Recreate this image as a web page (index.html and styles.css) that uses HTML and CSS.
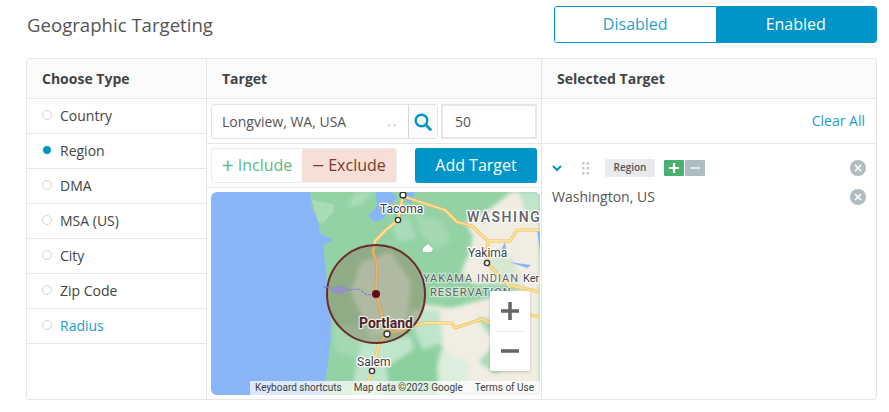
FILE: index.html
```html
<!DOCTYPE html>
<html>

<head>
	<meta charset="UTF-8">
	<title>Geographic Targeting</title>
	<link rel="stylesheet" href="styles.css">
</head>

<body>

	<div class="page">

		<div class="top">
			<h1 class="title">Geographic Targeting</h1>
			<div class="toggle">
				<button type="button" class="toggle-btn">Disabled</button>
				<button type="button" class="toggle-btn on">Enabled</button>
			</div>
		</div>

		<div class="panel">

			<div class="col col-type">
				<div class="col-head">Choose Type</div>
				<ul class="types">
					<li><span class="radio"></span>Country</li>
					<li><span class="radio checked"></span>Region</li>
					<li><span class="radio"></span>DMA</li>
					<li><span class="radio"></span>MSA (US)</li>
					<li><span class="radio"></span>City</li>
					<li><span class="radio"></span>Zip Code</li>
					<li class="active"><span class="radio"></span>Radius</li>
				</ul>
			</div>

			<div class="col col-target">
				<div class="col-head">Target</div>

				<div class="search-row">
					<div class="search">
						<span class="search-text">Longview, WA, USA</span>
						<span class="search-more">. .</span>
						<span class="search-btn">
							<svg width="18" height="18" viewBox="0 0 18 18">
								<circle cx="7.5" cy="7.5" r="5.8" fill="none" stroke="#0095c8" stroke-width="2.4"/>
								<path d="M11.8 11.8 L16.4 16.4" stroke="#0095c8" stroke-width="2.8" stroke-linecap="round"/>
							</svg>
						</span>
					</div>
					<div class="radius-box">50</div>
				</div>

				<div class="action-row">
					<div class="mode">
						<span class="mode-btn include"><b class="sign">+</b> Include</span>
						<span class="mode-btn exclude"><b class="sign">&minus;</b> Exclude</span>
					</div>
					<button type="button" class="add-btn">Add Target</button>
				</div>

				<div class="map">
					<svg class="map-art" width="329" height="203" viewBox="0 0 329 203">
						<rect width="329" height="203" fill="#8ab4f8"/>
						<!-- land -->
						<path d="M99 0 L101 16 L107 29 L109 41 L122 48 L112 53 L114 71 L116 93 L116 103 L119 123 L121 136 L117 170 L114 190 L114 203 L329 203 L329 0 Z" fill="#94d2a5"/>
						<path d="M101 8 L122 12 L123 19 L111 32 L107 29 Z" fill="#a8dcb9"/>
						<!-- terrain, soft edges -->
						<g class="terrain">
							<path d="M145 0 L163 0 L150 12 L135 16 Z" fill="#a8dcb9"/>
							<path d="M205 22 L232 30 L240 48 L225 58 L210 42 Z" fill="#a3d8b3"/>
							<path d="M180 30 L198 25 L205 46 L186 50 Z" fill="#a8dcb9"/>
							<path d="M120 135 L160 130 L172 150 L150 168 L125 160 Z" fill="#a3d8b3"/>
							<path d="M150 150 L200 145 L205 175 L170 203 L140 203 Z" fill="#bfe5cb"/>
							<path d="M175 175 L215 150 L235 185 L215 203 L180 203 Z" fill="#8ccf9f"/>
							<path d="M150 70 L180 60 L200 90 L195 140 L160 145 L140 100 Z" fill="#bfe5cb"/>
							<!-- dry east side -->
							<path d="M329 0 L300 0 L288 10 L268 24 L254 30 L262 44 L258 62 L250 80 L262 92 L300 92 L329 100 Z" fill="#f1ede3"/>
							<path d="M210 112 L240 116 L329 92 L329 203 L228 203 L236 170 L226 140 Z" fill="#f1ede3"/>
							<path d="M200 118 L228 118 L232 150 L212 158 L204 140 Z" fill="#bfe5cb"/>
							<path d="M265 125 L295 130 L305 165 L285 182 L268 170 L285 150 Z" fill="#a8dcb9"/>
							<path d="M230 158 L258 172 L254 200 L228 203 L226 175 Z" fill="#dceedd"/>
							<path d="M308 0 L329 0 L329 30 L316 26 Z" fill="#bfe5cb"/>
							<path d="M270 60 L300 64 L312 88 L285 90 Z" fill="#d7e8d2"/>
						</g>
						<!-- sound, lakes, river -->
						<path d="M165 0 L180 0 L186 5 L178 15 L172 27 L164 30 L157 24 L166 14 Z" fill="#8ab4f8"/>
						<path d="M196 0 L204 0 L200 12 L194 8 Z" fill="#8ab4f8"/>
						<path d="M326 38 L329 36 L329 60 Z M290 58 L294 50 L296 64 Z M298 70 L320 73 L316 76 Z" fill="#8ab4f8"/>
						<path d="M217 52 L222 57 L220 60 L212 60 L212 56 Z" fill="#f8f9fa"/>
						<!-- roads -->
						<g fill="none" stroke-linejoin="round" stroke-linecap="round">
							<path d="M192 3 L197 6 L234 18 L246 30 L261 34 L277 49 L299 49 L306 38 L329 38 M277 49 L276 71 L297 93 L329 100 M192 3 L187 28 L175 38 L164 49 L162 60 L166 72 L165 102 L170 120 L176 142 L168 152 L161 179 L152 203 M176 142 L214 131 L241 131 L244 136 L271 127 L279 131 L319 123 L329 125" stroke="#f2bb68" stroke-width="3.2"/>
							<path d="M192 3 L197 6 L234 18 L246 30 L261 34 L277 49 L299 49 L306 38 L329 38 M277 49 L276 71 L297 93 L329 100 M192 3 L187 28 L175 38 L164 49 L162 60 L166 72 L165 102 L170 120 L176 142 L168 152 L161 179 L152 203 M176 142 L214 131 L241 131 L244 136 L271 127 L279 131 L319 123 L329 125" stroke="#fde293" stroke-width="1.8"/>
						</g>
						<!-- radius -->
						<circle cx="165" cy="102" r="49" fill="#8a4a3a" fill-opacity="0.28" stroke="#6b2a2c" stroke-width="2"/>
						<path d="M112 95 L122 96 L130 94 L138 98 L148 97 L156 103 L165 102" fill="none" stroke="#8a7fd0" stroke-width="1.200" stroke-dasharray="3 1"/>
						<path d="M119 97 L130 95 L137 99 L130 102 L120 100 Z" fill="#9a8ad8" fill-opacity="0.8"/>
						<circle cx="165" cy="102" r="4" fill="#5e0f14"/>
						<!-- places -->
						<g fill="#fff" stroke="#333" stroke-width="1.4">
							<circle cx="192" cy="3" r="3"/>
							<circle cx="187" cy="28" r="2.6"/>
							<circle cx="276" cy="71" r="2.6"/>
							<circle cx="176" cy="142" r="3"/>
							<circle cx="161" cy="179" r="2.6"/>
						</g>
						<g class="labels">
							<text x="169" y="21" class="place">Tacoma</text>
							<text x="256" y="30" class="region">WASHING</text>
							<text x="257" y="65" class="place">Yakima</text>
							<text x="212" y="90" class="area">YAKAMA INDIAN</text>
							<text x="312" y="90" class="place small">Ker</text>
							<text x="219" y="104" class="area">RESERVATION</text>
							<text x="148" y="136" class="city">Portland</text>
							<text x="146" y="174" class="place">Salem</text>
						</g>
					</svg>

					<div class="zoom-box">
						<span class="zoom-btn">
							<svg width="18" height="18" viewBox="0 0 18 18"><path d="M0 9 H18 M9 0 V18" stroke="#666" stroke-width="3.6"/></svg>
						</span>
						<span class="zoom-line"></span>
						<span class="zoom-btn">
							<svg width="18" height="18" viewBox="0 0 18 18"><path d="M0 9 H18" stroke="#666" stroke-width="3.6"/></svg>
						</span>
					</div>

					<div class="credits">
						<span>Keyboard shortcuts</span>
						<span>Map data &copy;2023 Google</span>
						<span>Terms of Use</span>
					</div>
				</div>
			</div>

			<div class="col col-selected">
				<div class="col-head">Selected Target</div>
				<div class="clear-row"><a class="clear-all">Clear All</a></div>
				<div class="sel-head">
					<svg class="chevron" width="10" height="7" viewBox="0 0 10 7"><path d="M1 1 L5 5 L9 1" fill="none" stroke="#0095c8" stroke-width="2"/></svg>
					<svg class="grip" width="7" height="13" viewBox="0 0 7 13" fill="#c5cacd">
						<rect x="0" y="0" width="2.500" height="2.500"/><rect x="4.500" y="0" width="2.500" height="2.500"/>
						<rect x="0" y="5" width="2.500" height="2.500"/><rect x="4.500" y="5" width="2.500" height="2.500"/>
						<rect x="0" y="10" width="2.500" height="2.500"/><rect x="4.500" y="10" width="2.500" height="2.500"/>
					</svg>
					<span class="chip">Region</span>
					<span class="pm">
						<span class="pm-btn plus"><svg width="12" height="12" viewBox="0 0 12 12"><path d="M1 6 H11 M6 1 V11" stroke="#fff" stroke-width="2.200"/></svg></span>
						<span class="pm-btn minus"><svg width="12" height="12" viewBox="0 0 12 12"><path d="M1 6 H11" stroke="#e4e8ea" stroke-width="2.200"/></svg></span>
					</span>
					<span class="remove"><svg width="8" height="8" viewBox="0 0 8 8"><path d="M1 1 L7 7 M7 1 L1 7" stroke="#fff" stroke-width="1.600"/></svg></span>
				</div>
				<div class="sel-item">
					<span class="sel-name">Washington, US</span>
					<span class="remove"><svg width="8" height="8" viewBox="0 0 8 8"><path d="M1 1 L7 7 M7 1 L1 7" stroke="#fff" stroke-width="1.600"/></svg></span>
				</div>
			</div>

		</div>
	</div>

</body>

</html>
```

FILE: styles.css
```css
* { box-sizing: border-box; }

body {
	margin: 0;
	background-color: #fff;
	font-family: "Open Sans", sans-serif;
	font-size: 14px;
	color: #444;
}

.page { padding: 6px 12px 0 26px; }

.top {
	display: flex;
	justify-content: space-between;
	align-items: center;
	height: 37px;
	margin-bottom: 15px;
}

.title {
	margin: 0 0 1px 1px;
	font-size: 18.6px;
	font-weight: 400;
	color: #555;
}

.toggle {
	display: flex;
	width: 323px;
	height: 37px;
	border: 1px solid #0095c8;
	border-radius: 3px;
	overflow: hidden;
}

.toggle-btn {
	flex: 1;
	border: 0;
	padding: 0 0 2px;
	background-color: #fff;
	color: #2a9fcc;
	font-family: "Open Sans", sans-serif;
	font-size: 16px;
}

.toggle-btn.on {
	background-color: #0095c8;
	color: #fff;
}

.panel {
	display: grid;
	grid-template-columns: 180px 335px 1fr;
	height: 342px;
	border: 1px solid #e6e6e6;
	border-radius: 3px;
}

.col { border-right: 1px solid #e6e6e6; }
.col-selected { border-right: 0; }

.col-head {
	height: 40px;
	padding: 0 15px;
	line-height: 39px;
	background-color: #fbfbfb;
	border-bottom: 1px solid #e6e6e6;
	font-weight: 700;
	color: #444;
}

.types {
	margin: 0;
	padding: 0;
	list-style: none;
}

.types li {
	display: flex;
	align-items: center;
	height: 35px;
	padding: 0 0 2px 15px;
	border-bottom: 1px solid #e6e6e6;
	color: #444;
}

.types li.active { color: #1d9cc9; }

.radio {
	width: 10px;
	height: 10px;
	margin-right: 8px;
	border: 1px solid #d4d4d4;
	border-radius: 50%;
	background-color: #fff;
}

.radio.checked {
	border: 1px solid #fff;
	background-color: #0095c8;
}

.search-row {
	display: flex;
	height: 45px;
	padding: 5px 4px 0;
	border-bottom: 1px solid #e6e6e6;
	gap: 3px;
}

.search {
	display: flex;
	align-items: center;
	width: 227px;
	height: 35px;
	padding-left: 10px;
	border: 1px solid #e4e4e4;
	border-radius: 3px;
	color: #555;
}

.search-text { flex: 1; }

.search-more {
	margin-right: 12px;
	font-size: 11px;
	color: #888;
}

.search-btn {
	display: flex;
	align-items: center;
	justify-content: center;
	width: 29px;
	height: 33px;
	border-left: 1px solid #d6d6d6;
	background-color: #fbfbfb;
}

.radius-box {
	width: 96px;
	height: 35px;
	padding-left: 12px;
	line-height: 31px;
	border: 2px solid #e6e6e6;
	color: #555;
}

.action-row {
	display: flex;
	justify-content: space-between;
	height: 44px;
	padding: 4px 4px 0;
	border-bottom: 1px solid #e6e6e6;
}

.mode {
	display: flex;
	width: 186px;
	height: 35px;
	border: 1px solid #ececec;
	border-radius: 3px;
	overflow: hidden;
	font-size: 16px;
}

.mode-btn {
	display: flex;
	align-items: center;
	justify-content: center;
	gap: 4px;
	padding-bottom: 1px;
}

.sign { font-weight: 400; font-size: 21px; line-height: 1; }

.include { width: 90px; color: #5dbb82; }

.exclude {
	flex: 1;
	background-color: #f5dfd7;
	color: #7a3b2a;
}

.add-btn {
	width: 122px;
	height: 35px;
	border: 0;
	border-radius: 3px;
	padding: 0 0 1px;
	background-color: #0095c8;
	color: #fff;
	font-family: "Open Sans", sans-serif;
	font-size: 16px;
}

.map {
	position: relative;
	width: 329px;
	height: 203px;
	margin: 4px 0 0 4px;
	border-radius: 6px;
	overflow: hidden;
}

.map-art { display: block; }

.terrain { filter: blur(2px); }

.labels text {
	font-family: Roboto, sans-serif;
	paint-order: stroke;
	stroke: #fff;
	stroke-width: 2.5px;
	stroke-linejoin: round;
}

.place { font-size: 12px; fill: #3c4043; }
.place.small { font-size: 11px; }

.region {
	font-size: 14px;
	font-weight: 500;
	letter-spacing: 1.6px;
	fill: #5f6368;
}

.area {
	font-size: 11px;
	letter-spacing: 1px;
	fill: #5f6368;
	stroke-opacity: 0.5;
}

.city {
	font-size: 14px;
	font-weight: 700;
	fill: #4d1f24;
	stroke-opacity: 0.75;
}

.zoom-box {
	position: absolute;
	right: 10px;
	top: 99px;
	display: flex;
	flex-direction: column;
	align-items: center;
	width: 40px;
	height: 80px;
	background-color: #fff;
	box-shadow: 0 1px 3px rgba(0, 0, 0, 0.2);
	border-radius: 2px;
}

.zoom-btn {
	display: flex;
	align-items: center;
	justify-content: center;
	width: 40px;
	height: 39.500px;
}

.zoom-line {
	width: 30px;
	height: 1px;
	background-color: #e6e6e6;
}

.credits {
	position: absolute;
	right: 0;
	bottom: 0;
	display: flex;
	justify-content: space-between;
	width: 290px;
	height: 14px;
	padding: 0 6px 0 5px;
	background-color: rgba(255, 255, 255, 0.7);
	font-family: Roboto, sans-serif;
	font-size: 10px;
	line-height: 14px;
	color: #3c4043;
}

.clear-row {
	height: 45px;
	padding: 0 11px 2px 0;
	line-height: 43px;
	text-align: right;
	border-bottom: 1px solid #e6e6e6;
}

.clear-all { color: #1d9cc9; }

.sel-head {
	display: flex;
	align-items: center;
	height: 32px;
	margin-top: 8px;
	padding: 0 10px;
}

.chevron { margin-right: 20px; }
.grip { margin-right: 16px; }

.chip {
	width: 50px;
	height: 18px;
	margin-right: 9px;
	border-radius: 2px;
	background-color: #e8eaec;
	text-align: center;
	font-size: 10px;
	line-height: 17px;
	font-weight: 600;
	color: #555;
}

.pm { display: flex; gap: 1px; }

.pm-btn {
	display: flex;
	align-items: center;
	justify-content: center;
	width: 20px;
	height: 16px;
	border-radius: 1px;
}

.plus { background-color: #48b271; }
.minus { background-color: #adbcc1; }

.remove {
	display: flex;
	align-items: center;
	justify-content: center;
	width: 16px;
	height: 16px;
	margin-left: auto;
	border-radius: 50%;
	background-color: #b0bcc2;
}

.sel-item {
	display: flex;
	align-items: center;
	height: 26px;
	padding: 0 10px;
	color: #555;
}

.sel-name { margin-bottom: 2px; }
```
